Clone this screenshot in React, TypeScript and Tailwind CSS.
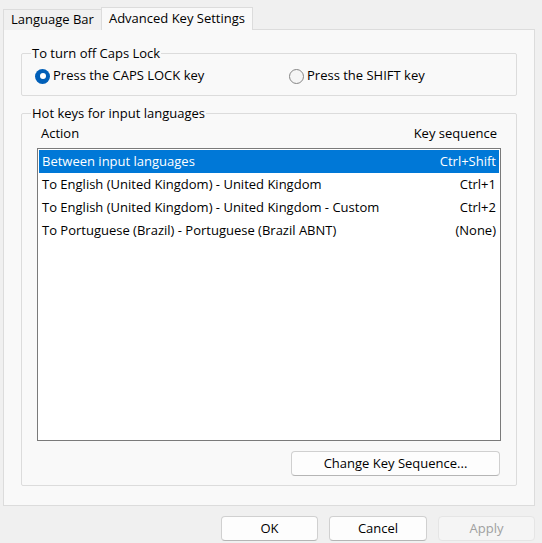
import React from 'react';

type Hotkey = { action: string; keys: string };

const hotkeys: Hotkey[] = [
  { action: 'Between input languages', keys: 'Ctrl+Shift' },
  { action: 'To English (United Kingdom) - United Kingdom', keys: 'Ctrl+1' },
  { action: 'To English (United Kingdom) - United Kingdom - Custom', keys: 'Ctrl+2' },
  { action: 'To Portuguese (Brazil) - Portuguese (Brazil ABNT)', keys: '(None)' },
];

const Radio: React.FC<{ checked?: boolean; label: string; className?: string }> = ({ checked, label, className = '' }) => (
  <label className={`flex items-center gap-[3px] ${className}`}>
    {checked ? (
      <span className="w-[15px] h-[15px] rounded-full bg-[#005fb8] flex items-center justify-center">
        <span className="w-[6px] h-[6px] rounded-full bg-white" />
      </span>
    ) : (
      <span className="w-[15px] h-[15px] rounded-full border border-[#868686] bg-[#f5f5f5]" />
    )}
    <span>{label}</span>
  </label>
);

const Group: React.FC<{ title: string; className?: string; children: React.ReactNode }> = ({ title, className = '', children }) => (
  <div className={`relative border border-[#dcdcdc] rounded-[2px] ${className}`}>
    <span className="absolute -top-[9px] left-[9px] px-[1px] bg-[#f9f9f9] leading-[16px]">{title}</span>
    {children}
  </div>
);

const Button: React.FC<{ label: string; disabled?: boolean; className?: string }> = ({ label, disabled, className = '' }) => (
  <button
    className={`h-[25px] rounded-[4px] border flex items-center justify-center ${
      disabled ? 'border-[#e5e5e5] bg-[#f5f5f5] text-[#a0a0a0]' : 'border-[#d0d0d0] border-b-[#b5b5b5] bg-[#fdfdfd] text-black'
    } ${className}`}
  >
    {label}
  </button>
);

export default function App() {
  return (
    <div className="w-[542px] h-[543px] bg-[#f0f0f0] text-[13px] text-black font-['Segoe_UI','Open_Sans','Noto_Sans',sans-serif] flex flex-col">
      {/* tab strip */}
      <div className="flex items-end h-[30px] pl-[3px] pt-[7px] relative z-10">
        <div className="h-[21px] px-[7px] border border-b-0 border-[#dcdcdc] bg-[#f0f0f0] flex items-center">Language Bar</div>
        <div className="h-[23px] px-[7px] border border-b-0 border-[#dcdcdc] bg-[#f9f9f9] flex items-center -ml-px">Advanced Key Settings</div>
      </div>

      {/* tab page */}
      <div className="mx-[3px] -mt-px w-[532px] h-[477px] border border-[#dcdcdc] bg-[#f9f9f9] px-[17px] pt-[23px]">
        <Group title="To turn off Caps Lock" className="h-[43px] pt-[3px] flex items-center">
          <Radio checked label="Press the CAPS LOCK key" className="ml-[13px] w-[254px]" />
          <Radio label="Press the SHIFT key" />
        </Group>

        <Group title="Hot keys for input languages" className="mt-[17px] h-[373px] px-[15px] pt-[9px]">
          <div className="flex justify-between px-[4px] leading-[20px]">
            <span>Action</span>
            <span>Key sequence</span>
          </div>
          <div className="mt-[5px] h-[293px] border border-[#7a7a7a] bg-white p-px">
            {hotkeys.map((h, i) => (
              <div
                key={h.action}
                className={`h-[23px] flex items-center justify-between px-[3px] ${i === 0 ? 'bg-[#0078d7] text-white' : ''}`}
              >
                <span>{h.action}</span>
                <span>{h.keys}</span>
              </div>
            ))}
          </div>
          <div className="flex justify-end mt-[10px] pr-[1px]">
            <Button label="Change Key Sequence..." className="w-[209px] h-[25px]" />
          </div>
        </Group>
      </div>

      {/* dialog buttons */}
      <div className="flex justify-end gap-[11px] pr-[7px] mt-[10px]">
        <Button label="OK" className="w-[97px]" />
        <Button label="Cancel" className="w-[98px]" />
        <Button label="Apply" disabled className="w-[97px]" />
      </div>
    </div>
  );
}
